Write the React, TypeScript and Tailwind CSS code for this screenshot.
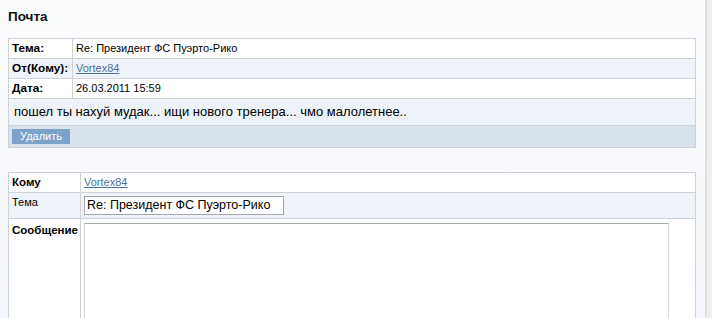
import React from "react";

const font = { fontFamily: '"Liberation Sans", Arial, sans-serif' };

function Row1({ label, children, alt }: { label: string; children: React.ReactNode; alt?: boolean }) {
  return (
    <div className={`flex h-[20px] border-b border-[#cfd3d8] ${alt ? "bg-[#eef3f9]" : "bg-white"}`}>
      <div className="w-[64px] shrink-0 border-r border-[#cfd3d8] pl-[3px] text-[11.8px] font-bold leading-[19px] text-black">
        {label}
      </div>
      <div className="flex-1 pl-[3px] text-[11px] leading-[19px] text-black">{children}</div>
    </div>
  );
}

export default function App() {
  return (
    <div className="flex h-[318px] w-[712px] overflow-hidden bg-gradient-to-b from-[#fcfdfe] to-[#f3f6fa]" style={font}>
      <div className="w-[705px] shrink-0 pl-[8px] pr-[9px]">
        <div className="pt-[9px] text-[13.5px] font-bold leading-[16px] text-[#111]">Почта</div>
        <div className="mt-[13px] border-x border-t border-[#cfd3d8]">
          <Row1 label="Тема:">Re: Президент ФС Пуэрто-Рико</Row1>
          <Row1 label="От(Кому):" alt>
            <span className="text-[#4c70a0] underline">Vortex84</span>
          </Row1>
          <Row1 label="Дата:">26.03.2011 15:59</Row1>
          <div className="h-[27px] border-b border-[#cfd3d8] bg-[#eef3f9] pl-[5px] text-[13px] leading-[25px] text-black">
            пошел ты нахуй мудак... ищи нового тренера... чмо малолетнее..
          </div>
          <div className="h-[22px] border-b border-[#cfd3d8] bg-[#d6e1eb] pl-[3px] pt-[3px]">
            <div className="flex h-[15px] w-[58px] items-center justify-center bg-[#7da2c9] text-[11px] leading-[15px] text-white">
              Удалить
            </div>
          </div>
        </div>

        <div className="mt-[24px] border-x border-t border-[#cfd3d8]">
          <div className="flex h-[20px] border-b border-[#cfd3d8] bg-white">
            <div className="w-[72px] shrink-0 border-r border-[#cfd3d8] pl-[3px] text-[11.5px] font-bold leading-[19px] text-black">
              Кому
            </div>
            <div className="flex-1 pl-[3px] text-[11px] leading-[19px]">
              <span className="text-[#4c70a0] underline">Vortex84</span>
            </div>
          </div>
          <div className="flex h-[26px] border-b border-[#cfd3d8] bg-[#eef3f9]">
            <div className="w-[72px] shrink-0 border-r border-[#cfd3d8] pl-[3px] pt-[2px] text-[11px] leading-[14px] text-black">
              Тема
            </div>
            <div className="flex-1 pl-[3px] pt-[3px]">
              <div className="h-[19px] w-[200px] border border-[#a3a7ad] bg-white pl-[2px] text-[12.5px] leading-[17px] text-black">
                Re: Президент ФС Пуэрто-Рико
              </div>
            </div>
          </div>
          <div className="flex h-[120px] bg-white">
            <div className="w-[72px] shrink-0 border-r border-[#cfd3d8] pl-[3px] pt-[4px] text-[11.5px] font-bold leading-[14px] text-black">
              Сообщение
            </div>
            <div className="flex-1 pl-[3px] pt-[4px]">
              <div className="h-[120px] w-[585px] border border-[#cfd0d2] border-t-[#a9abae] bg-white" />
            </div>
          </div>
        </div>
      </div>
      <div className="w-[7px] shrink-0 border-l-2 border-[#dcdfe2] bg-[#eeeeee]" />
    </div>
  );
}
